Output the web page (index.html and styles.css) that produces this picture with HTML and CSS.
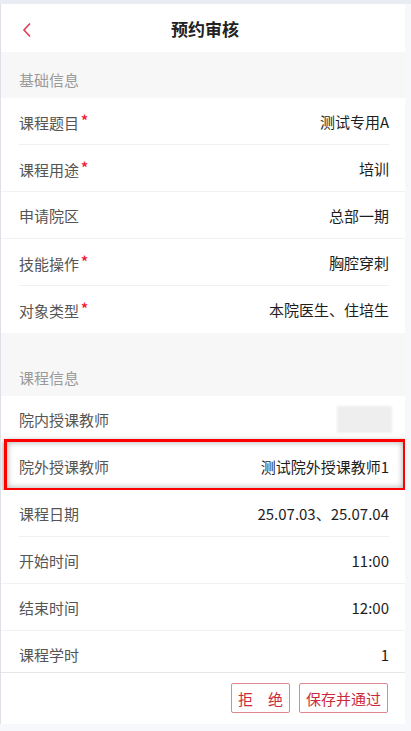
FILE: index.html
```html
<html>
    <head>
        <meta charset="utf-8">
        <title>预约审核</title>
        <link rel="stylesheet" href="styles.css">
    </head>
    <body>
        <div class="page">
            <div class="panel">
                <div class="nav-bar">
                    <svg class="back" width="10" height="16" viewBox="0 0 10 16">
                        <path d="M8 1.5 L2 8 L8 14.5" fill="none" stroke="#e23b5a" stroke-width="1.6"/>
                    </svg>
                    <div class="nav-title">预约审核</div>
                </div>

                <div class="scroll">
                    <div class="section-title">基础信息</div>
                    <div class="row line-inset">
                        <span class="label">课程题目<i class="req">*</i></span>
                        <span class="value">测试专用A</span>
                    </div>
                    <div class="row line-full">
                        <span class="label">课程用途<i class="req">*</i></span>
                        <span class="value">培训</span>
                    </div>
                    <div class="row line-full">
                        <span class="label">申请院区</span>
                        <span class="value">总部一期</span>
                    </div>
                    <div class="row line-inset">
                        <span class="label">技能操作<i class="req">*</i></span>
                        <span class="value">胸腔穿刺</span>
                    </div>
                    <div class="row">
                        <span class="label">对象类型<i class="req">*</i></span>
                        <span class="value">本院医生、住培生</span>
                    </div>

                    <div class="section-title second">课程信息</div>
                    <div class="row">
                        <span class="label">院内授课教师</span>
                        <span class="blurred"></span>
                    </div>
                    <div class="row marked">
                        <span class="label">院外授课教师</span>
                        <span class="value">测试院外授课教师1</span>
                    </div>
                    <div class="row line-inset">
                        <span class="label">课程日期</span>
                        <span class="value">25.07.03、25.07.04</span>
                    </div>
                    <div class="row line-full">
                        <span class="label">开始时间</span>
                        <span class="value">11:00</span>
                    </div>
                    <div class="row line-full">
                        <span class="label">结束时间</span>
                        <span class="value">12:00</span>
                    </div>
                    <div class="row">
                        <span class="label">课程学时</span>
                        <span class="value">1</span>
                    </div>
                </div>

                <div class="footer">
                    <button class="btn">拒　绝</button>
                    <button class="btn">保存并通过</button>
                </div>
            </div>
        </div>
    </body>
</html>
```

FILE: styles.css
```css
html, body{
    margin: 0;
    padding: 0;
}

body{
    width: 411px;
    height: 731px;
    overflow: hidden;
    background: #f7f8fc;
    font-family: "Noto Sans CJK SC", "Noto Sans", sans-serif;
}

.page{
    height: 731px;
    box-sizing: border-box;
    border-top: 4px solid #e9ecf3;
}

.panel{
    width: 404px;
    height: 720px;
    border-left: 1px solid #dde0e6;
    background: #ffffff;
    display: flex;
    flex-direction: column;
}

.nav-bar{
    height: 48px;
    flex-shrink: 0;
    display: flex;
    align-items: center;
    justify-content: center;
    position: relative;
}

.back{
    position: absolute;
    left: 21px;
    top: 18px;
}

.nav-title{
    font-size: 17px;
    font-weight: bold;
    color: #222;
    margin-left: 4px;
}

.scroll{
    flex: 1;
    overflow: hidden;
    background: #f7f7f7;
}

.section-title{
    padding: 18px 18px 8px;
    line-height: 20px;
    font-size: 15px;
    color: #9a9a9a;
}

.section-title.second{
    margin-top: 17px;
}

.row{
    height: 47px;
    box-sizing: border-box;
    padding: 0 16px 0 18px;
    display: flex;
    align-items: center;
    justify-content: space-between;
    background: #ffffff;
    font-size: 15px;
    position: relative;
}

.line-full{
    border-bottom: 1px solid #f2f2f2;
}

.line-inset::after{
    content: "";
    position: absolute;
    left: 18px;
    right: 16px;
    bottom: 0;
    height: 1px;
    background: #f0f0f0;
}

.label{
    color: #555;
}

.req{
    font-style: normal;
    font-weight: bold;
    color: #f0203a;
    font-size: 14px;
    vertical-align: 3px;
    margin-left: 2px;
}

.value{
    color: #1e1e1e;
}

.blurred{
    width: 55px;
    height: 27px;
    background: #eeeeee;
    filter: blur(1px);
    margin-right: -3px;
}

.marked::before{
    content: "";
    position: absolute;
    left: 3px;
    right: -1px;
    top: -4px;
    bottom: -1px;
    border: 3px solid #ff0000;
    box-shadow: 0 2px 5px rgba(0, 0, 0, 0.5), inset 0 0 6px rgba(0, 0, 0, 0.35);
}

.footer{
    height: 52px;
    flex-shrink: 0;
    box-sizing: border-box;
    border-top: 1px solid #e6e6e6;
    display: flex;
    justify-content: flex-end;
    align-items: flex-start;
    gap: 9px;
    padding: 10px 17px 0 0;
}

.btn{
    height: 30px;
    padding: 0 6px;
    border: 1px solid #e0868f;
    border-radius: 2px;
    background: #ffffff;
    color: #cc2a3c;
    font-size: 15px;
    font-family: "Noto Sans CJK SC", "Noto Sans", sans-serif;
}
```
